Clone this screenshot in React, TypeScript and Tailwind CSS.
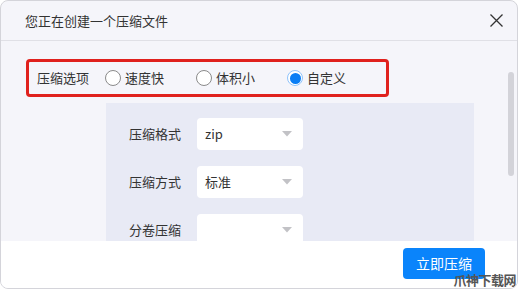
import React from "react";

const font = { fontFamily: '"Noto Sans CJK SC", "Noto Sans", sans-serif' };

function Radio({ label, checked }: { label: string; checked?: boolean }) {
  return (
    <div className="flex items-center gap-[4px]">
      {checked ? (
        <span className="flex h-[16px] w-[16px] items-center justify-center rounded-full border border-[#8fc3fb] bg-white">
          <span className="h-[11px] w-[11px] rounded-full bg-[#0a7ef5]" />
        </span>
      ) : (
        <span className="h-[16px] w-[16px] rounded-full border border-[#8a8a8a] bg-white" />
      )}
      <span className="text-[13px] leading-[16px] text-[#333]">{label}</span>
    </div>
  );
}

function SelectRow({ label, value }: { label: string; value: string }) {
  return (
    <div className="flex items-center gap-[16px]">
      <span className="w-[52px] text-[13px] leading-[16px] text-[#333]">{label}</span>
      <div className="flex h-[32px] w-[106px] items-center justify-between rounded-[4px] bg-white pl-[8px] pr-[11px]">
        <span className="text-[13px] leading-[16px] text-[#333]">{value}</span>
        <svg width="10" height="6" viewBox="0 0 10 6">
          <path d="M0 0 L10 0 L5 5.5 Z" fill="#c2c2c6" />
        </svg>
      </div>
    </div>
  );
}

export default function App() {
  return (
    <div style={font} className="h-[289px] w-[518px] overflow-hidden">
      <div className="flex h-full w-full flex-col overflow-hidden rounded-[8px] border border-[#d4d4da] bg-[#f5f5fa]">
        <div className="flex h-[40px] shrink-0 items-center justify-between border-b border-[#e0e0e6] pl-[24px] pr-[14px]">
          <span className="text-[13px] leading-[16px] text-[#333]">您正在创建一个压缩文件</span>
          <svg width="13" height="13" viewBox="0 0 13 13">
            <path d="M0.5 0.5 L12.5 12.5 M12.5 0.5 L0.5 12.5" stroke="#333" strokeWidth="1.3" />
          </svg>
        </div>
        <div className="relative flex-1 overflow-hidden pl-[25px] pt-[18px]">
          <div className="flex h-[38px] w-[363px] items-center rounded-[4px] border-[3px] border-[#e0211d] pl-[8px]">
            <span className="mr-[16px] text-[13px] leading-[16px] text-[#333]">压缩选项</span>
            <div className="flex items-center gap-[32px]">
              <Radio label="速度快" />
              <Radio label="体积小" />
              <Radio label="自定义" checked />
            </div>
          </div>
          <div className="ml-[80px] mt-[6px] flex h-[200px] w-[368px] flex-col gap-[16px] bg-[#e8eaf5] pl-[23px] pt-[15px]">
            <SelectRow label="压缩格式" value="zip" />
            <SelectRow label="压缩方式" value="标准" />
            <SelectRow label="分卷压缩" value="" />
          </div>
          <div className="absolute right-[3px] top-[31px] h-[104px] w-[6px] rounded-full bg-[#d3d3d9]" />
        </div>
        <div className="relative flex h-[47px] shrink-0 items-start justify-end bg-white pr-[32px] pt-[7px]">
          <button className="flex h-[31px] w-[82px] items-center justify-center rounded-[4px] bg-[#0a84fb] text-[14px] text-white">
            立即压缩
          </button>
          <span className="absolute bottom-[1px] right-[1px] text-[13px] font-bold leading-[14px] tracking-[-0.5px] text-[#555]">
            爪神下载网
          </span>
        </div>
      </div>
    </div>
  );
}
